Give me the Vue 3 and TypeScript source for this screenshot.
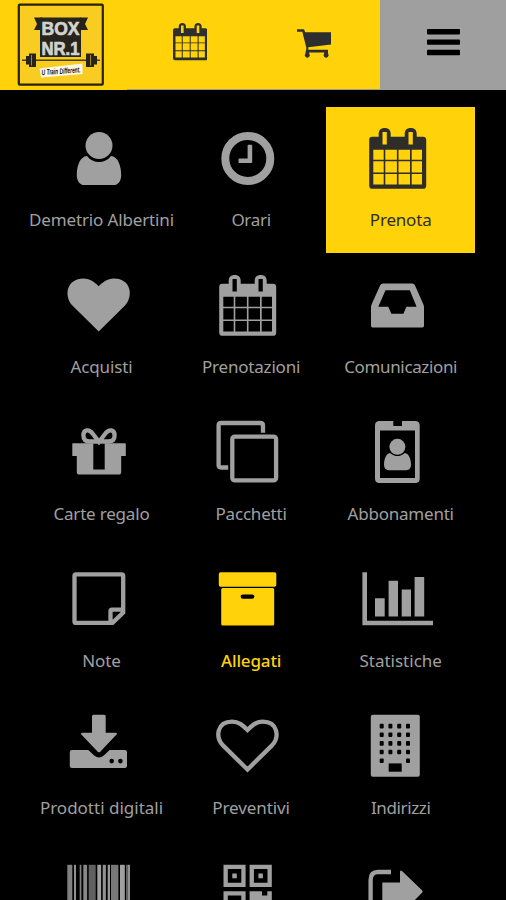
<script setup lang="ts">
type IconName =
  | 'user' | 'clock' | 'calendar' | 'heart' | 'inbox' | 'gift' | 'copy' | 'badge'
  | 'note' | 'archive' | 'chart' | 'download' | 'heart-outline' | 'building'
  | 'barcode' | 'qr' | 'share'

interface MenuItem {
  label: string
  icon: IconName
  state?: 'active' | 'accent'
  tracking?: number
}

const items: MenuItem[] = [
  { label: 'Demetrio Albertini', icon: 'user', tracking: -0.14 },
  { label: 'Orari', icon: 'clock', tracking: -0.3 },
  { label: 'Prenota', icon: 'calendar', state: 'active', tracking: -0.2 },
  { label: 'Acquisti', icon: 'heart', tracking: -0.15 },
  { label: 'Prenotazioni', icon: 'calendar', tracking: -0.2 },
  { label: 'Comunicazioni', icon: 'inbox', tracking: -0.36 },
  { label: 'Carte regalo', icon: 'gift', tracking: -0.2 },
  { label: 'Pacchetti', icon: 'copy', tracking: -0.2 },
  { label: 'Abbonamenti', icon: 'badge', tracking: -0.22 },
  { label: 'Note', icon: 'note', tracking: -0.1 },
  { label: 'Allegati', icon: 'archive', state: 'accent', tracking: -0.15 },
  { label: 'Statistiche', icon: 'chart' },
  { label: 'Prodotti digitali', icon: 'download' },
  { label: 'Preventivi', icon: 'heart-outline', tracking: -0.1 },
  { label: 'Indirizzi', icon: 'building', tracking: -0.38 },
  { label: '', icon: 'barcode' },
  { label: '', icon: 'qr' },
  { label: '', icon: 'share' },
]

const calendarPath =
  'M19.3 14.7H25.7V12C25.7 8 28 6 31.7 6S37.7 8 37.7 12V14.7H51.7V12C51.7 8 54 6 57.7 6S63.7 8 63.7 12V14.7H70Q73.2 14.7 73.2 18V63.4Q73.2 66.8 70 66.8H19.5Q16.2 66.8 16.2 63.4V18Q16.2 14.7 19.3 14.7Z' +
  'M29.5 10V22.5H33.8V10Z M55.5 10V22.5H59.8V10Z' +
  [27.7, 39.2, 52].map((y, r) =>
    [20.3, 32.3, 45.5, 58.7].map((x, c) =>
      `M${x} ${y}V${[37.7, 50.4, 62.4][r]}H${[30.7, 43.9, 57, 69][c]}V${y}Z`,
    ).join(''),
  ).join('')

const heartPath =
  'M44.7 62.4L18.4 36.4C9.6 27 12.5 9.4 29.5 9.4C36.5 9.4 41 13.4 44.7 17.2C48.4 13.4 53 9.4 60 9.4C77 9.4 79.8 27 71 36.4Z'

const barcode: number[][] = [
  [13.3, 5, 0.8], [20, 2, 0.9], [25.7, 1.7, 0.8], [29.3, 3.8, 0.85], [34.7, 7, 0.6], [43.3, 3.8, 1],
  [48.7, 3.2, 0.9], [53.7, 2.3, 0.95], [57, 7.4, 0.75], [66, 4.8, 1], [72, 1.6, 0.6], [73.6, 2.4, 0.9],
]

const windows = [16.1, 24.7, 33.4, 42, 50.7].flatMap((y, r) =>
  [28.7, 37.4, 46.2, 55].filter((_, c) => r < 4 || c === 0 || c === 3).map((x) => ({ x, y })),
)
</script>

<template>
  <div class="screen">
    <header class="bar">
      <div class="brand">
        <svg class="logo" viewBox="0 0 88 84">
          <rect x="1.8" y="1.7" width="84" height="80" rx="1" class="logo-frame" />
          <path d="M17 14.5H25V27H17L20 21Z M71 14.5H63V27H71L68 21Z" class="ink" />
          <rect x="23" y="14.5" width="41" height="39.5" class="ink" />
          <text x="24.5" y="32" textLength="38" lengthAdjust="spacingAndGlyphs" class="logo-text">BOX</text>
          <text x="24.5" y="52.3" textLength="38" lengthAdjust="spacingAndGlyphs" class="logo-text">NR.1</text>
          <path d="M5 57.3H83" class="rod" />
          <path d="M9 53H12V50.5H19V64H12V61.5H9Z M80 53H77V50.5H69V64H77V61.5H80Z" class="ink" />
          <path d="M14.5 52V62.5 M73.5 52V62.5" class="plate" />
          <path d="M22.5 65.5L65.5 60.5V71L24 74.5Z" class="tag" />
          <text x="24.8" y="72.2" transform="rotate(-4 24 72)" textLength="39" lengthAdjust="spacingAndGlyphs" class="tag-text">U Train Different.</text>
        </svg>
      </div>
      <div class="actions">
        <svg class="bar-calendar" viewBox="16.2 6 57 61" preserveAspectRatio="none"><path :d="calendarPath" fill-rule="evenodd" /></svg>
        <svg class="bar-cart" viewBox="0 0 34 30">
          <path d="M0 .3H7L8.2 3.2H34V15.5L11.3 18.2V20.8H31V24.6A2.5 2.5 0 1 1 27.2 24.6V23.4H12.2V24.6A2.5 2.5 0 1 1 8.4 24.6L9.4 19L5.3 2.7H0Z" />
        </svg>
      </div>
      <div class="menu-button">
        <svg viewBox="0 0 33 27"><rect width="33" height="5.4" rx=".8" /><rect y="10.4" width="33" height="5.4" rx=".8" /><rect y="20.8" width="33" height="5.4" rx=".8" /></svg>
      </div>
    </header>

    <nav class="grid">
      <div v-for="(item, i) in items" :key="i" class="tile" :class="item.state">
        <svg class="icon" viewBox="0 0 90 70">
          <template v-if="item.icon === 'user'">
            <circle cx="45" cy="23.5" r="13.5" />
            <path d="M33 34C36 38 40.5 40 45 40S54 38 57 34C64 34.5 67.2 44 67.2 53C67.2 59.5 64 63.1 59.5 63.1H30.5C26 63.1 22.8 59.5 22.8 53C22.8 44 26 34.5 33 34Z" />
          </template>
          <template v-else-if="item.icon === 'clock'">
            <circle cx="44.8" cy="36.4" r="22.5" class="line thick" />
            <path d="M45.4 22.7H48.4Q49.2 22.7 49.2 23.5V40.2Q49.2 41 48.4 41H36.3Q35.5 41 35.5 40.2V37.2Q35.5 36.4 36.3 36.4H44.6V23.5Q44.6 22.7 45.4 22.7Z" />
          </template>
          <path v-else-if="item.icon === 'calendar'" :d="calendarPath" fill-rule="evenodd" />
          <path v-else-if="item.icon === 'heart'" :d="heartPath" />
          <path v-else-if="item.icon === 'inbox'" fill-rule="evenodd" d="M30 14.4H59.5Q61 14.4 61.8 16L70 34.4Q71 36.5 71 38.5V56.8Q71 58.4 69.4 58.4H19.6Q18 58.4 18 56.8V38.5Q18 36.5 19 34.4L27.3 16Q28 14.4 30 14.4ZM32.5 21.3L25.3 37.8H35.3L38.4 44.8H50.4L53.4 37.8H63.6L56.8 21.3Z" />
          <template v-else-if="item.icon === 'gift'">
            <path d="M45 26L39 18C35 12.3 29.4 13.6 29.4 19.5C29.4 24 32.5 25.5 36 25.5H54C57.5 25.5 60.6 24 60.6 19.5C60.6 13.6 55 12.3 51 18Z" class="line" />
            <path fill-rule="evenodd" d="M19 27.2H71Q71.8 27.2 71.8 28V39.9H67.2V56Q67.2 58.6 64.6 58.6H25.4Q22.8 58.6 22.8 56V39.9H18.3V28Q18.3 27.2 19 27.2ZM39.3 27.2V53.6H50.7V27.2Z" />
          </template>
          <template v-else-if="item.icon === 'copy'">
            <rect x="29.3" y="20.6" width="43.8" height="43.8" rx="2.5" class="line" />
            <path d="M60 16.8V9.5Q60 7 57.5 7H18.1Q15.6 7 15.6 9.5V49Q15.6 51.5 18.1 51.5H25.2" class="line" />
          </template>
          <template v-else-if="item.icon === 'badge'">
            <path fill-rule="evenodd" d="M26.5 4.9H40.3V9.9H49V4.9H62.2Q66.7 4.9 66.7 9.4V62.4Q66.7 66.9 62.2 66.9H26.5Q22 66.9 22 62.4V9.4Q22 4.9 26.5 4.9ZM27 14.5V61.9H62V14.5Z" />
            <circle cx="44.4" cy="30.8" r="8" />
            <path d="M37 36.9C41.5 41 47.3 41 51.8 36.9C56 37.5 58 43 58 48.5C58 52.3 56 54.2 53.3 54.2H35.6C32.8 54.2 31 52.3 31 48.5C31 43 33 37.5 37 36.9Z" />
          </template>
          <path v-else-if="item.icon === 'note'" class="line" d="M58.5 59.9H22Q20.5 59.9 20.5 58.4V13Q20.5 11.4 22 11.4H67.6Q69.2 11.4 69.2 13V49.5L58.5 59.9ZM56.5 59.9V48.2Q56.5 46.7 58 46.7H69.2" />
          <template v-else-if="item.icon === 'archive'">
            <rect x="15.8" y="9.3" width="57.5" height="14.4" rx="1.8" />
            <path fill-rule="evenodd" d="M19.8 25.1H69.6Q71.2 25.1 71.2 26.7V61Q71.2 62.6 69.6 62.6H19.8Q18.2 62.6 18.2 61V26.7Q18.2 25.1 19.8 25.1ZM39.8 31.4A2.2 2.2 0 0 0 39.8 35.8H49.2A2.2 2.2 0 0 0 49.2 31.4Z" />
          </template>
          <path v-else-if="item.icon === 'chart'" d="M9.4 9.3H14V57.8H80V62.3H9.4ZM22 35.3H31.7V53.6H22ZM35.6 17.8H45V53.6H35.6ZM48.7 26.6H58V53.6H48.7ZM61.6 14H71.2V53.6H61.6Z" />
          <template v-else-if="item.icon === 'download'">
            <path d="M39.5 4.7H50.2Q51.7 4.7 51.7 6.2V22.7H61.5Q64 22.7 62.3 24.7L46.5 41.5Q45 43.2 43.5 41.5L27.6 24.7Q26 22.7 28.5 22.7H38V6.2Q38 4.7 39.5 4.7Z" />
            <path fill-rule="evenodd" d="M18 40H34.3L40.5 45.8Q45 49 49.5 45.8L55.7 40H70.8Q73 40 73 42.2V55.8Q73 58 70.8 58H18Q15.8 58 15.8 55.8V42.2Q15.8 40 18 40ZM57.7 48.8A2.3 2.3 0 1 0 57.7 53.4A2.3 2.3 0 1 0 57.7 48.8ZM66.4 48.8A2.3 2.3 0 1 0 66.4 53.4A2.3 2.3 0 1 0 66.4 48.8Z" />
          </template>
          <path v-else-if="item.icon === 'heart-outline'" class="line" d="M44.5 59.5L20 35.4C12 27 14 11.6 29 11.6C36 11.6 40 15.4 44.5 20C49 15.4 53 11.6 59.8 11.6C74.8 11.6 76.8 27 69 35.4Z" />
          <template v-else-if="item.icon === 'building'">
            <rect x="17.8" y="4.7" width="49" height="62" rx="2" />
            <rect v-for="(w, n) in windows" :key="n" :x="w.x - 2" :y="w.y - 2.3" width="4" height="4.6" rx="1" class="hole" />
            <rect x="35.7" y="53.4" width="13" height="8.3" class="hole" />
          </template>
          <template v-else-if="item.icon === 'barcode'">
            <rect v-for="b in barcode" :key="b[0]" :x="b[0]" y="8.8" :width="b[1]" height="52" :opacity="b[2]" />
          </template>
          <path v-else-if="item.icon === 'qr'" fill-rule="evenodd" d="M20.5 8.8H42.6V31.1H20.5ZM24.8 13.1V26.8H38.3V13.1ZM29.3 17.6H33.8V22.2H29.3ZM46.6 8.8H68.8V31.1H46.6ZM50.9 13.1V26.8H64.5V13.1ZM55.4 17.6H59.9V22.2H55.4ZM20.5 35.2H42.6V57.5H20.5ZM24.8 39.5V53H38.3V39.5ZM46.6 35.2H59V39.5H64.3V35.2H68.8V48.5H46.6Z" />
          <template v-else>
            <path d="M38 16H25Q17.6 16 17.6 24V60" class="line" />
            <path d="M47 16Q47 13.4 49 15L69 34.2Q70.2 35.5 69 36.8L49 57Q47 58.5 47 56V45H29.3V26.5H47Z" />
          </template>
        </svg>
        <span v-if="item.label" class="label" :style="{ letterSpacing: `${item.tracking ?? 0}px` }">{{ item.label }}</span>
      </div>
    </nav>
  </div>
</template>

<style>
body {
  margin: 0;
  background: #000;
}
</style>

<style scoped>
.screen {
  width: 506px;
  height: 900px;
  overflow: hidden;
  background: #000;
  font-family: "Noto Sans", "Open Sans", sans-serif;
}
.bar {
  display: flex;
  height: 90px;
  background: #ffd20a;
}
.brand {
  box-sizing: border-box;
  width: 127px;
  padding: 3px 0 0 17px;
}
.logo {
  display: block;
  width: 88px;
  height: 84px;
}
.logo-frame {
  fill: #f9cc22;
  stroke: #28210c;
  stroke-width: 2.2;
}
.ink {
  fill: #25231c;
}
.logo-text {
  font: bold 18px "Liberation Sans", sans-serif;
  fill: #d2d2ce;
  stroke: #d2d2ce;
  stroke-width: 0.7;
}
.rod {
  stroke: #4b3d0c;
  stroke-width: 1.4;
}
.plate {
  stroke: #a8861a;
  stroke-width: 1;
}
.tag {
  fill: #fffbe8;
}
.tag-text {
  font: italic bold 8px "Liberation Sans", sans-serif;
  fill: #111;
}
.actions {
  box-sizing: border-box;
  display: flex;
  width: 253.3px;
  padding-left: 45.7px;
  border-bottom: 1px solid #a29c80;
}
.bar-calendar {
  width: 34.4px;
  height: 37.4px;
  margin-top: 23.3px;
  fill: #2e2e2e;
}
.bar-cart {
  width: 34px;
  height: 30px;
  margin: 28.6px 0 0 90.3px;
  fill: #2e2e2e;
}
.menu-button {
  box-sizing: border-box;
  flex: 1;
  padding: 29px 0 0 47px;
  background: #9f9f9f;
}
.menu-button svg {
  display: block;
  width: 33px;
  height: 27px;
}
.grid {
  display: grid;
  grid-template-columns: repeat(3, 149.6px);
  grid-auto-rows: 146.9px;
  padding: 16.5px 0 0 26.7px;
}
.tile {
  display: flex;
  flex-direction: column;
  color: #a0a0a0;
}
.tile.active {
  background: #ffd20a;
  color: #2e2d2a;
}
.tile.accent {
  color: #ffd20a;
}
.icon {
  display: block;
  flex: none;
  width: 90px;
  height: 70px;
  margin: 15.5px 0 0 27.2px;
  fill: currentColor;
}
.line {
  fill: none;
  stroke: currentColor;
  stroke-width: 4.3;
}
.thick {
  stroke-width: 8;
}
.hole {
  fill: #000;
}
.label {
  margin-top: 15px;
  font-size: 17px;
  line-height: 26px;
  text-align: center;
  white-space: nowrap;
}
.accent .label {
  font-weight: 500;
}
</style>
